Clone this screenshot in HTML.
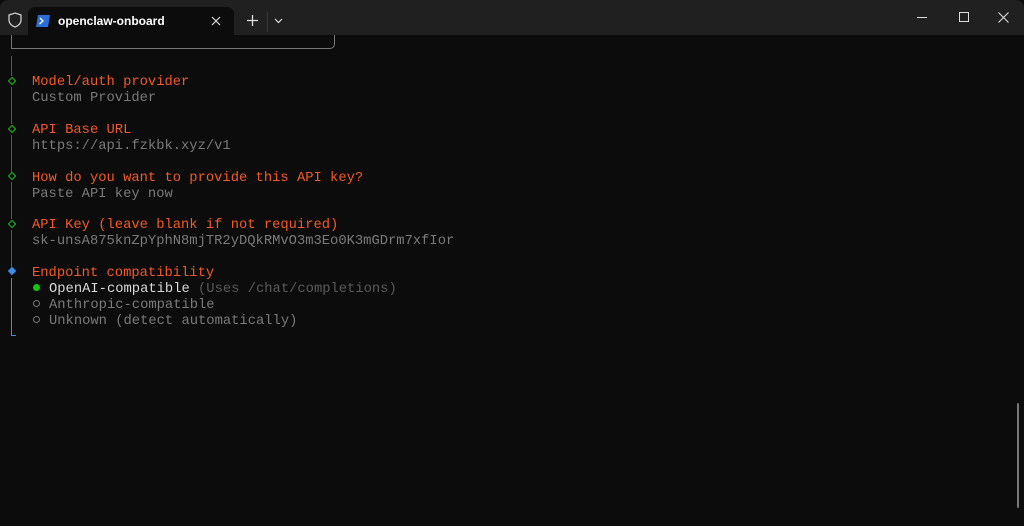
<!DOCTYPE html>
<html><head><meta charset="utf-8"><style>
*{margin:0;padding:0;box-sizing:border-box}
body{width:1024px;height:526px;background:#0c0c0c;overflow:hidden;position:relative;font-family:"Liberation Mono",monospace;}
.bar{position:absolute;left:0;top:0;width:1024px;height:35px;background:#202020;border-top-left-radius:8px;border-top-right-radius:8px}
.tab{position:absolute;left:28px;top:7px;width:206px;height:29px;background:#0c0c0c;border-radius:7px 7px 0 0}
.tt{position:absolute;left:58px;top:14px;font:600 12px "Liberation Sans",sans-serif;color:#fff}
.l{position:absolute;font-size:13.8px;line-height:16px;white-space:pre;height:16px}
.o{color:#f25a2a}.g{color:#7a7a7a}.w{color:#d8d8d8}.dg{color:#5a5a5a}
.gut{position:absolute;left:11px;width:1px;background:#555}
.dia{position:absolute;left:8.5px;width:6px;height:6px;border:1.3px solid #16c60c;transform:rotate(45deg)}
</style></head><body>
<div class="bar"></div>
<svg style="position:absolute;left:8px;top:12px" width="14" height="16" viewBox="0 0 14 16"><path d="M7 1 L13 3 V8 C13 11.5 10 14 7 15 C4 14 1 11.5 1 8 V3 Z" fill="none" stroke="#ccc" stroke-width="1.3"/></svg>
<div class="tab"></div>
<svg style="position:absolute;left:36px;top:15px" width="14" height="12" viewBox="0 0 14 12"><path d="M2 0 H14 L12 12 H0 Z" fill="#2a6fd6"/><path d="M4 3 L7 6 L3.5 9" stroke="#fff" stroke-width="1.3" fill="none"/></svg>
<div class="tt">openclaw-onboard</div>
<svg style="position:absolute;left:211px;top:16px" width="10" height="10"><path d="M1 1 L9 9 M9 1 L1 9" stroke="#ddd" stroke-width="1.2"/></svg>
<svg style="position:absolute;left:247px;top:15px" width="11" height="11"><path d="M5.5 0 V11 M0 5.5 H11" stroke="#ddd" stroke-width="1.3"/></svg>
<div style="position:absolute;left:267px;top:12px;width:1px;height:20px;background:#3a3a3a"></div>
<svg style="position:absolute;left:274px;top:18px" width="9" height="6"><path d="M1 1 L4.5 4.5 L8 1" stroke="#ddd" stroke-width="1.2" fill="none"/></svg>
<div style="position:absolute;left:917px;top:17px;width:10px;height:1px;background:#ddd"></div>
<div style="position:absolute;left:959px;top:12px;width:10px;height:10px;border:1px solid #ddd"></div>
<svg style="position:absolute;left:998px;top:12px" width="11" height="11"><path d="M0.5 0.5 L10.5 10.5 M10.5 0.5 L0.5 10.5" stroke="#ddd" stroke-width="1.1"/></svg>

<div style="position:absolute;left:11px;top:35px;width:324px;height:14px;border-left:1px solid #777;border-bottom:1px solid #777;border-right:1px solid #777;border-bottom-right-radius:5px"></div>
<div class="gut" style="top:56px;height:20px"></div>
<div class="gut" style="top:87px;height:37px"></div>
<div class="gut" style="top:135px;height:37px"></div>
<div class="gut" style="top:182px;height:37px"></div>
<div class="gut" style="top:230px;height:37px"></div>
<div class="dia" style="top:78px"></div>
<div class="dia" style="top:126px"></div>
<div class="dia" style="top:173px"></div>
<div class="dia" style="top:221px"></div>
<div style="position:absolute;left:8.5px;top:268px;width:6px;height:6px;background:#3b8eea;transform:rotate(45deg)"></div>
<div style="position:absolute;left:11px;top:278px;width:5px;height:58px;border-left:1px solid #3b8eea;border-bottom:1px solid #3b8eea"></div>

<div class="l o" style="left:32px;top:75px">Model/auth provider</div>
<div class="l g" style="left:32px;top:91px">Custom Provider</div>
<div class="l o" style="left:32px;top:123px">API Base URL</div>
<div class="l g" style="left:32px;top:139px">https://api.fzkbk.xyz/v1</div>
<div class="l o" style="left:32px;top:171px">How do you want to provide this API key?</div>
<div class="l g" style="left:32px;top:187px">Paste API key now</div>
<div class="l o" style="left:32px;top:218px">API Key (leave blank if not required)</div>
<div class="l g" style="left:32px;top:234px">sk-unsA875knZpYphN8mjTR2yDQkRMvO3m3Eo0K3mGDrm7xfIor</div>
<div class="l o" style="left:32px;top:266px">Endpoint compatibility</div>
<div style="position:absolute;left:33px;top:284px;width:7px;height:7px;border-radius:50%;background:#16c60c"></div>
<div class="l w" style="left:49px;top:282px">OpenAI-compatible <span class="dg">(Uses /chat/completions)</span></div>
<div style="position:absolute;left:33px;top:300px;width:7px;height:7px;border-radius:50%;border:1px solid #777"></div>
<div class="l g" style="left:49px;top:298px">Anthropic-compatible</div>
<div style="position:absolute;left:33px;top:316px;width:7px;height:7px;border-radius:50%;border:1px solid #777"></div>
<div class="l g" style="left:49px;top:314px">Unknown (detect automatically)</div>

<div style="position:absolute;left:1017px;top:403px;width:2px;height:105px;background:#777;border-radius:1px"></div>
</body></html>
